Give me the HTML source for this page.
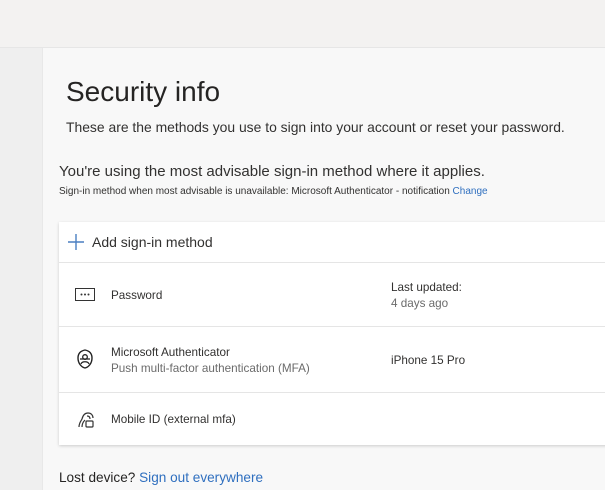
<!DOCTYPE html><html><head><style>
body{margin:0;width:605px;height:490px;overflow:hidden;background:#f8f8f8;font-family:"Liberation Sans",sans-serif;color:#323130;position:relative}
.top{position:absolute;left:0;top:0;width:605px;height:47px;background:#f3f2f1;border-bottom:1px solid #e6e6e6}
.side{position:absolute;left:0;top:48px;width:42px;height:442px;background:#efefef;border-right:1px solid #e8e8e8}
.a{position:absolute;white-space:nowrap}
.card{position:absolute;left:59px;top:222px;width:560px;height:223px;background:#fff;box-shadow:0 1px 3px rgba(0,0,0,.18)}
.hr{position:absolute;left:0;width:560px;height:1px;background:#e5e5e5}
.blue{color:#2f6fbf}
.g{color:#6b6b6b}
</style></head><body>
<div class="top"></div><div class="side"></div>
<div class="a" style="left:66px;top:76px;font-size:28px;color:#252423">Security info</div>
<div class="a" style="left:66px;top:119px;font-size:13.9px">These are the methods you use to sign into your account or reset your password.</div>
<div class="a" style="left:59px;top:163px;font-size:15px">You're using the most advisable sign-in method where it applies.</div>
<div class="a" style="left:59px;top:186px;font-size:10px">Sign-in method when most advisable is unavailable: Microsoft Authenticator - notification <span class="blue">Change</span></div>
<div class="card">
<svg class="a" style="left:8px;top:11px" width="18" height="18"><path d="M9 1V17M1 9H17" stroke="#4a7fc1" stroke-width="1.4"/></svg>
<div class="a" style="left:33px;top:12px;font-size:14px">Add sign-in method</div>
<div class="hr" style="top:40px"></div>
<svg class="a" style="left:16px;top:66px" width="20" height="13"><rect x=".5" y=".5" width="19" height="12" fill="none" stroke="#333"/><circle cx="6.5" cy="6.5" r="1" fill="#333"/><circle cx="10" cy="6.5" r="1" fill="#333"/><circle cx="13.5" cy="6.5" r="1" fill="#333"/></svg>
<div class="a" style="left:52px;top:67px;font-size:11.7px">Password</div>
<div class="a" style="left:332px;top:59px;font-size:11.7px">Last updated:</div>
<div class="a g" style="left:332px;top:75px;font-size:11.7px">4 days ago</div>
<div class="hr" style="top:104px"></div>
<svg class="a" style="left:17px;top:127px" width="18" height="20"><path d="M9 1C4 2 2 5 2 9c0 5 3 9 7 10 4-1 7-5 7-10 0-4-2-7-7-8z" fill="none" stroke="#222" stroke-width="1.4"/><circle cx="9" cy="8" r="2.3" fill="none" stroke="#222" stroke-width="1.3"/><path d="M5 15c1-3 7-3 8 0M4 10h10" stroke="#222" stroke-width="1.2" fill="none"/></svg>
<div class="a" style="left:52px;top:124px;font-size:11.7px">Microsoft Authenticator</div>
<div class="a g" style="left:52px;top:140px;font-size:11.7px">Push multi-factor authentication (MFA)</div>
<div class="a" style="left:332px;top:132px;font-size:11.7px">iPhone 15 Pro</div>
<div class="hr" style="top:170px"></div>
<svg class="a" style="left:18px;top:189px" width="18" height="18"><path d="M2 16c0-4 2-6 3-8 1-4 3-6 6-6 3 0 5 2 5 5M5 16c0-3 1-5 3-7M10 5c2 0 3 1 3 3" fill="none" stroke="#333" stroke-width="1.2"/><rect x="9" y="10" width="7" height="6" rx="1" fill="none" stroke="#333" stroke-width="1.2"/></svg>
<div class="a" style="left:52px;top:191px;font-size:11.7px">Mobile ID (external mfa)</div>
</div>
<div class="a" style="left:59px;top:470px;font-size:13.6px"><span style="color:#252423">Lost device?</span> <span class="blue">Sign out everywhere</span></div>
</body></html>
